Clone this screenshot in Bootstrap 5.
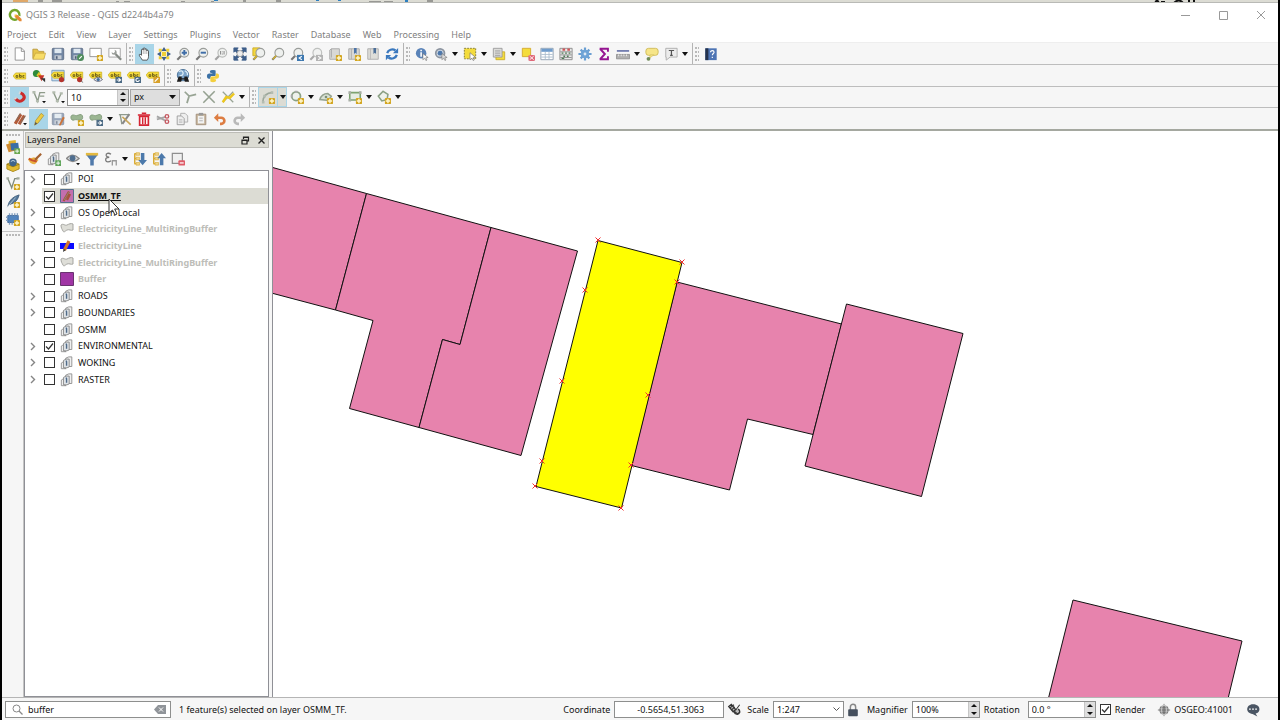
<!DOCTYPE html>
<html lang="en">
<head>
<meta charset="utf-8">
<meta name="viewport" content="width=device-width, initial-scale=1">
<title>QGIS 3 Release - QGIS d2244b4a79</title>
<link href="https://cdn.jsdelivr.net/npm/bootstrap@5.3.0/dist/css/bootstrap.min.css" rel="stylesheet">
<script src="https://cdn.jsdelivr.net/npm/bootstrap@5.3.0/dist/js/bootstrap.bundle.min.js" defer></script>
<style>
  body { font-family: "Noto Sans", "Open Sans", sans-serif; font-size: 9px; line-height: 14px; color: #111; background: #000; }
  svg { display: block; }
  .ic { width: 14px; height: 14px; flex: none; }
  .desktop { background: #000; padding: 0 2px; overflow: hidden; }
  .behind { height: 3px; background: #dcdcd4; border-bottom: 1px solid #b9bab6; overflow: hidden; flex: none; }
  .window { background: #f6f6f6; min-height: 0; }
  .titlebar { background: #fff; height: 24px; color: #858585; padding-left: 6px; gap: 4px; flex: none; }
  .winbtn { border: 0; background: none; padding: 0; width: 34px; height: 22px; display: flex; align-items: center; justify-content: center; }
  .menus { background: #fff; height: 15px; padding-top: 1px; flex: none; }
  .menus a { color: #808080; text-decoration: none; padding: 0 6px 0 5px; }
  .menus a + a { padding-left: 6px; }
  .tools { border-bottom: 1px solid #bdbdbd; background: #f6f6f6; flex: none; height: 22px; }
  .tools.first { border-top: 1px solid #eee; height: 23px; }
  .tools.third { height: 21px; }
  .tools.last { border-bottom: 2px solid #a5a8a0; height: 23px; }
  .grp { display: flex; align-items: center; padding-right: 2px; }
  .grp.sep { border-right: 1px solid #b4b4b4; }
  .handle { width: 8px; height: 16px; flex: none; padding: 0 2px; background: radial-gradient(circle at 2px 2px, #b9b9b9 1px, transparent 1px) 1px 0 / 3px 4px; background-clip: content-box; }
  .tb { border: 0; padding: 0; background: none; width: 19px; height: 20px; display: flex; align-items: center; justify-content: center; flex: none; color: inherit; }
  .tb.on { background: #a9d5e8; }
  .arr { border: 0; padding: 0; background: none; width: 10px; height: 20px; display: flex; align-items: center; justify-content: center; flex: none; }
  .arr::before { content: ""; border: 3px solid transparent; border-top: 4px solid #111; border-bottom: 0; }
  .boxed { display: flex; background: #dcdcd4; outline: 1px solid #a9d5e8; outline-offset: -1px; }
  .boxed .arr { border-left: 1px solid #a9d5e8; }
  .spin, .field { background: #fff; border: 1px solid #8e8f8e; display: flex; align-items: center; height: 17px; flex: none; }
  .spin input, .field input { border: 0; outline: 0; padding: 0 0 0 3px; background: none; font: inherit; color: inherit; min-width: 0; width: 100%; height: 15px; }
  .spin .steps { width: 11px; height: 15px; flex: none; background: #dedede; border-left: 1px solid #c6c6c6; display: flex; flex-direction: column; }
  .steps button { border: 0; padding: 0; background: none; flex: 1; display: flex; align-items: center; justify-content: center; }
  .steps button::before { content: ""; border: 3px solid transparent; border-bottom: 3px solid #111; border-top: 0; }
  .steps button + button::before { border-bottom: 0; border-top: 3px solid #111; }
  .pick { display: flex; align-items: center; position: relative; height: 17px; flex: none; }
  .pick select { appearance: none; width: 100%; height: 17px; border: 1px solid #a5a5a5; border-radius: 0; font: inherit; color: inherit; padding: 0 3px; background: #dedede; outline: 0; }
  .pick svg { position: absolute; right: 4px; pointer-events: none; }
  .pick.light select { background: #fff; border-color: #8e8f8e; }
  .w62 { width: 62px; } .w50 { width: 51px; padding-left: 1px; } .w110 { width: 110px; } .w71 { width: 71px; } .w68 { width: 68px; }
  .rail { width: 22px; flex: none; border-right: 1px solid #c4c4c4; padding-top: 2px; }
  .rail .dots { width: 16px; height: 5px; margin: 0 auto; background: radial-gradient(circle at 2px 2px, #b9b9b9 1px, transparent 1px) 0 0 / 3px 5px; }
  .rail .ending { border-top: 1px solid #c4c4c4; margin-top: 3px; padding-top: 1px; }
  .rail .tb { height: 18px; margin: 0 auto; }
  .dock { width: 245px; flex: none; }
  .dockhead { height: 16px; background: #dcdcd4; border: 1px solid #bcbcb6; margin: 1px 0 0 1px; padding-left: 1px; }
  .docktools { height: 22px; padding-left: 1px; }
  .treebox { background: #fff; border: 1px solid #8f9096; flex: 1; }
  .tree { height: 217px; display: grid; grid-auto-rows: 1fr; }
  .node { display: flex; align-items: center; padding-left: 2px; margin: 0; white-space: nowrap; }
  .node .exp { width: 11px; margin-right: 6px; flex: none; border: 0; padding: 0; background: none; }
  .node .ic { margin: 0 4px 0 5px; }
  .node.sel { background: linear-gradient(#dcdcd4, #dcdcd4) 17px 0 no-repeat; }
  .node.sel label { font-weight: 700; text-decoration: underline; }
  .node.off label { font-weight: 700; color: #bdbdb8; }
  .tick { appearance: none; width: 11px; height: 11px; border: 1px solid #333; background: #fff; margin: 0; flex: none; }
  .tick:checked { background: #fff url("data:image/svg+xml,%3Csvg xmlns='http://www.w3.org/2000/svg' viewBox='0 0 9 9'%3E%3Cpath d='M1 4.500l2.500 2.500L8 1.500' fill='none' stroke='%23333' stroke-width='1.200'/%3E%3C/svg%3E"); }
  .canvas { background: #fff; border-left: 1px solid #8f9096; margin-left: 3px; min-width: 0; overflow: hidden; }
  .status { height: 23px; flex: none; border-top: 1px solid #b5b5b5; padding: 1px 0 0 3px; }
  .search { width: 166px; padding-left: 6px; gap: 2px; }
  .crs { width: auto; margin-left: 12px; gap: 3px; }
  .msgs { margin: 0 16px 0 10px; }
  .pointer { position: absolute; left: 107px; top: 198px; width: 13px; height: 18px; }
</style>
</head>
<body>
<svg width="0" height="0" class="position-absolute" aria-hidden="true">
  <defs>
    <g id="star"><rect x="9" y="9" width="7" height="7" rx="1" fill="#d2a520"/><path d="M12.500 10v5M10 12.500h5" stroke="#fff8d0" stroke-width="1.600"/></g>
    <g id="lens"><path d="M6 10L1.500 14.500" stroke="#777" stroke-width="2.400"/><circle cx="9.500" cy="6.500" r="5" fill="#eef0ee" stroke="#9a9d9a" stroke-width="1.300"/></g>
    <g id="ar"><path d="M11.500 12.500h4.500l-2.200 2.700z" fill="#111"/></g>
    <g id="tag"><path d="M0 7l3-3.500h11.500v7H3z" fill="#f6dc3c" stroke="#c9ac1e" stroke-width=".8"/><path d="M3.500 6.500h2v2h-2zM7.500 4.500v4h2V6.500h-2M13 6.500h-1.700v2H13" fill="none" stroke="#554a10" stroke-width=".9"/></g>
    <g id="poly"><path d="M1 6c0-3 3-3 5-2s5-2 7-1 2 5 0 6-6-1-8 0-4 0-4-3z" fill="#9bb692" stroke="#7f9878"/></g>
    <g id="arrows"><path d="M8.500 9H16v7H8.500z" fill="#4d6b85"/><path d="M10 12.500h4M12 10.500l2.500 2-2.500 2" stroke="#fff" fill="none" stroke-width="1.200"/></g>

    <symbol id="new" viewBox="0 0 16 16"><path d="M2.500 1h7L13 4.500V15H2.500z" fill="#fff" stroke="#8c8c8c"/><path d="M9.500 1v4H13" fill="none" stroke="#8c8c8c"/></symbol>
    <symbol id="open" viewBox="0 0 16 16"><path d="M1 13V2.500h5L7.500 5h6v8z" fill="#e6c44a" stroke="#b8983a"/><path d="M1 14L4 7h11.500L13.500 14z" fill="#f8dd68" stroke="#c4a440" stroke-width=".8"/></symbol>
    <symbol id="save" viewBox="0 0 16 16"><rect x="1.500" y="1.500" width="13" height="13" rx="1" fill="#7387a4" stroke="#5b6b84"/><path d="M4 2h8v5H4z" fill="#dfe8f0"/><path d="M4 9.500h8V14H4z" fill="#c6ccd4"/><path d="M5.500 10.500h2v3h-2z" fill="#50607a"/></symbol>
    <symbol id="saveas" viewBox="0 0 16 16"><use href="#save"/><circle cx="12" cy="12" r="4" fill="#4f8d5c"/><path d="M10.500 13.500l3-3" stroke="#fff" stroke-width="1.300"/></symbol>
    <symbol id="layout" viewBox="0 0 16 16"><path d="M1 1.500h13v9.500H1z" fill="#fff" stroke="#8c8c8c"/><use href="#star"/></symbol>
    <symbol id="layouts" viewBox="0 0 16 16"><path d="M1 1.500h13v10H1z" fill="#fff" stroke="#9b9b9b"/><path d="M8.500 8l6.500 6.500" stroke="#858a85" stroke-width="2.600"/><path d="M4 6a3 3 0 1 0 3.500-3L8 5.500 6.500 7z" fill="#9a9e9a"/></symbol>
    <symbol id="hand" viewBox="0 0 16 16"><path d="M5 15c-1-2-3-4-3.500-5.500C1 8 3 8 4 9.500V3.500c0-1.500 1.800-1.500 2 0V2c0-1.500 2-1.500 2 0v1c.2-1.500 2-1.300 2 0v1.500c.3-1.300 2-1 2 .3V11c0 2-1 3-1.500 4z" fill="#fff" stroke="#333" stroke-width=".9"/><path d="M6 3.500V8M8 3v5M10 4.500V8" stroke="#777" stroke-width=".6"/></symbol>
    <symbol id="pansel" viewBox="0 0 16 16"><path d="M5.500 5.500h5v5h-5zM2 2h3.500v3.500H2zM10.500 2H14v3.500h-3.500zM2 10.500h3.500V14H2zM10.500 10.500H14V14h-3.500z" fill="#f0d035"/><path d="M8 0l3 4.500H5zM8 16l3-4.500H5zM0 8l4.500-3v6zM16 8l-4.500-3v6z" fill="#44628a"/></symbol>
    <symbol id="zin" viewBox="0 0 16 16"><use href="#lens"/><path d="M9.500 3.500v6M6.500 6.500h6" stroke="#3f6da8" stroke-width="2.200"/></symbol>
    <symbol id="zout" viewBox="0 0 16 16"><use href="#lens"/><path d="M6.500 6.500h6" stroke="#3f6da8" stroke-width="2.200"/></symbol>
    <symbol id="znat" viewBox="0 0 16 16"><g opacity=".65"><use href="#lens"/><path d="M7.500 4.500v4M11.500 4.500v4M9.500 5v1M9.500 7.500v1" stroke="#555" stroke-width="1.200"/></g></symbol>
    <symbol id="zfull" viewBox="0 0 16 16"><path d="M1 1h5L4.500 2.500 7 5 5 7 2.500 4.500 1 6zM15 1v5l-1.500-1.500L11 7 9 5l2.500-2.500L10 1zM1 15v-5l1.500 1.500L5 9l2 2-2.500 2.500L6 15zM15 15h-5l1.500-1.500L9 11l2-2 2.500 2.500L15 10z" fill="#3f5f8a" stroke="#3f5f8a"/><circle cx="8" cy="7.500" r="3.500" fill="#eee" stroke="#999"/></symbol>
    <symbol id="zsel" viewBox="0 0 16 16"><path d="M1 1h8v9H1z" fill="#f4d73b" stroke="#caa925"/><use href="#lens"/><path d="M5.500 10.500L2 14" stroke="#d4b32c" stroke-width="2"/></symbol>
    <symbol id="zlay" viewBox="0 0 16 16"><use href="#lens"/><path d="M6 10L2 14" stroke="#d4b32c" stroke-width="1.500"/></symbol>
    <symbol id="zlast" viewBox="0 0 16 16"><use href="#lens"/><path d="M8 9h8v7H8z" fill="#3d78b0"/><path d="M13.500 10.500l-3 2 3 2" fill="none" stroke="#fff" stroke-width="1.300"/></symbol>
    <symbol id="znext" viewBox="0 0 16 16"><g opacity=".6"><use href="#lens"/><path d="M8 9h8v7H8z" fill="#888"/><path d="M10.500 10.500l3 2-3 2" fill="none" stroke="#fff" stroke-width="1.300"/></g></symbol>
    <symbol id="view1" viewBox="0 0 16 16"><path d="M2 3.500L4 2h9v10l-2 2H2z" fill="#d8d8d5" stroke="#a5a5a5"/><path d="M4 2v10" stroke="#aaa"/><use href="#star"/></symbol>
    <symbol id="bm1" viewBox="0 0 16 16"><path d="M2 2h12v12H2z" fill="#d8d8d5" stroke="#a5a5a5"/><path d="M5 2v12" stroke="#aaa"/><path d="M8 1h3v7L9.500 6.500 8 8z" fill="#4c74a8"/><use href="#star"/></symbol>
    <symbol id="bm2" viewBox="0 0 16 16"><path d="M2 2h12v12H2z" fill="#deded9" stroke="#aaa"/><path d="M5 2v12" stroke="#b5b5b5"/><path d="M8.500 1h3v7L10 6.500 8.500 8z" fill="#4c6f98"/></symbol>
    <symbol id="refresh" viewBox="0 0 16 16"><path d="M2.500 7A6 5.500 0 0 1 12 4M13.500 9A6 5.500 0 0 1 4 12" fill="none" stroke="#3a78be" stroke-width="2.600"/><path d="M15 1v6H9zM1 15V9h6z" fill="#3a78be"/></symbol>
    <symbol id="ident" viewBox="0 0 16 16"><circle cx="7" cy="7" r="6" fill="#5a83b8"/><path d="M7 6v5M7 3v1.800" stroke="#fff" stroke-width="1.800"/><path d="M9 7.500v7l2-1.700 1.500 2.700 1.200-.7-1.400-2.500 2.700-.3z" fill="#fff" stroke="#666" stroke-width=".7"/></symbol>
    <symbol id="action" viewBox="0 0 16 16"><circle cx="7" cy="7" r="5" fill="#c9d4e2" stroke="#8d95a0" stroke-width="2"/><circle cx="7" cy="7" r="2.800" fill="#4d78ac"/><path d="M9 7.500v7l2-1.700 1.500 2.700 1.200-.7-1.400-2.500 2.700-.3z" fill="#ddd" stroke="#777" stroke-width=".7"/></symbol>
    <symbol id="select" viewBox="0 0 16 16"><path d="M1.500 1.500h13v12h-13z" fill="#f4dc3c" stroke="#7c7433" stroke-dasharray="2 1.300"/><path d="M8 6.500v8l2.200-1.700 1.500 2.700 1.200-.7-1.400-2.500 3-.3z" fill="#fff" stroke="#777" stroke-width=".8"/></symbol>
    <symbol id="selform" viewBox="0 0 16 16"><path d="M4.500 5.500h10v9h-10z" fill="#f4dc3c" stroke="#c9ab2a"/><path d="M1.500 1.500h10v10h-10z" fill="#dcdcda" stroke="#999"/><path d="M3.500 4.500h6M3.500 7h6M3.500 9.500h6" stroke="#999"/></symbol>
    <symbol id="desel" viewBox="0 0 16 16"><path d="M1.500 1.500h9.500v9.500H1.500z" fill="#f4dc3c" stroke="#d4a82a"/><rect x="8.500" y="9" width="7.500" height="7" rx="1.500" fill="#e0697a"/><path d="M10 10.500l4.500 4M14.500 10.500l-4.500 4" stroke="#fff"/></symbol>
    <symbol id="attr" viewBox="0 0 16 16"><path d="M1 1.500h14v13H1z" fill="#fff" stroke="#8b9cae"/><path d="M1.500 2h13v3.500h-13z" fill="#6f9ccc"/><path d="M1.500 8.500h13M1.500 11.500h13M6 5.500v9M10.300 5.500v9" stroke="#a9bccd"/></symbol>
    <symbol id="calc" viewBox="0 0 16 16"><path d="M1 1.500h14v13H1z" fill="#e8e8e8" stroke="#888"/><path d="M1.500 5.500h13M1.500 9h13M1.500 12h13" stroke="#8a8a8a"/><path d="M4 3h3M9.500 3h3" stroke="#cf5558" stroke-width="2.600"/><path d="M3 7h2M7 7h2M11 7h2M5 10.500h2M9 10.500h2M3 13h3" stroke="#4f7c56" stroke-width="1.600"/></symbol>
    <symbol id="gear" viewBox="0 0 16 16"><path d="M8 .5v15M.5 8h15M3 3l10 10M13 3L3 13" stroke="#6a9fd3" stroke-width="2.500"/><circle cx="8" cy="8" r="4.900" fill="#6ea3d6"/><circle cx="8" cy="8" r="1.600" fill="#dfe9f3"/></symbol>
    <symbol id="sum" viewBox="0 0 16 16"><path d="M3 2h9.500v3.500M3.500 2L9 8l-5.500 6M3 14h9.500v-3.500" fill="none" stroke="#951591" stroke-width="2.200"/></symbol>
    <symbol id="measure" viewBox="0 0 16 16"><path d="M1 4.500h14" stroke="#4c5a9a" stroke-width="1.600"/><path d="M.5 8.500h15v5H.5z" fill="#b0b0b0" stroke="#909090"/><path d="M3 8.500v2M6 8.500v2M9 8.500v2M12 8.500v2" stroke="#eee"/></symbol>
    <symbol id="tips" viewBox="0 0 16 16"><rect x="1" y="1.500" width="14" height="8" rx="3" fill="#f6e588" stroke="#cdb857"/><path d="M6 9l-1 4 5-4z" fill="#f6e588" stroke="#cdb857" stroke-width=".6"/><circle cx="4" cy="13.500" r="2.200" fill="#6f8b57"/></symbol>
    <symbol id="text" viewBox="0 0 16 16"><path d="M2 1.500h13v10H7L2.500 15v-3.500H2z" fill="#ececec" stroke="#aaa"/><path d="M5.500 4h6M8.500 4v6M7 9.500h3" stroke="#555" stroke-width="1.400"/></symbol>
    <symbol id="help" viewBox="0 0 16 16"><path d="M1.500 1.500h13v13.500h-13z" fill="#4d74b4"/><path d="M1.500 1.500H5v13.500H1.500z" fill="#24324c"/><path d="M7.500 6c0-2.500 4-2.500 4 0 0 1.500-2 1.500-2 3.500M9.500 11v1.500" fill="none" stroke="#fff" stroke-width="1.300"/></symbol>

    <symbol id="lab" viewBox="0 0 16 16"><use href="#tag" y="1"/></symbol>
    <symbol id="diag" viewBox="0 0 16 16"><circle cx="5" cy="5" r="4" fill="#2e8b3b"/><path d="M8 3l3 4-3 3-3-3z" fill="#e4c52b"/><path d="M7 7h7l-3 7z" fill="#c63427"/><path d="M10 10.500l5 0v4.500z" fill="#333"/></symbol>
    <symbol id="labpin" viewBox="0 0 16 16"><path d="M1 1.500h14v12H1z" fill="#cfe0ee" stroke="#6d95bb"/><use href="#tag"/><circle cx="12" cy="12" r="3" fill="#b5342c"/></symbol>
    <symbol id="labred" viewBox="0 0 16 16"><use href="#tag"/><circle cx="11" cy="12" r="3" fill="#b5342c"/><path d="M12 13l3 2.500" stroke="#666"/></symbol>
    <symbol id="labeye" viewBox="0 0 16 16"><use href="#tag"/><path d="M5.500 12q5-5 10 0q-5 4.500-10 0z" fill="#e8eef3" stroke="#667"/><circle cx="10.500" cy="12" r="1.800" fill="#3d6a9b"/></symbol>
    <symbol id="labmove" viewBox="0 0 16 16"><use href="#tag"/><use href="#arrows"/></symbol>
    <symbol id="labrot" viewBox="0 0 16 16"><use href="#tag"/><path d="M8.500 9H16v7H8.500z" fill="#4d6b85"/><path d="M14 12.500a1.900 1.900 0 1 1-1-1.700" fill="none" stroke="#fff" stroke-width="1.200"/></symbol>
    <symbol id="labedit" viewBox="0 0 16 16"><use href="#tag"/><path d="M8.500 9H16v7H8.500z" fill="#d8a12a"/><path d="M10 14.500l4-4" stroke="#fff" stroke-width="1.400"/></symbol>
    <symbol id="osm" viewBox="0 0 16 16"><circle cx="8" cy="7" r="6.500" fill="#7ba3c9" stroke="#456d94"/><path d="M3 3q4-2 5 1T4 8M10 2q4 2 3 5" fill="none" stroke="#dcecf6" stroke-width="1.500"/><path d="M3 8.500h3.500v2h3v-2H13l2 6h-5l-.5-2.500h-3L6 14.500H1z" fill="#1c1c1c"/></symbol>
    <symbol id="py" viewBox="0 0 16 16"><path d="M4.500 4V2.500Q4.500 1 8 1t3 1.500V7Q11 8 9 8H6Q5 8 5 11H3Q1 11 1 8t2.500-3H8" fill="#3c71a6"/><path d="M11.500 12v1.500Q11.500 15 8 15t-3-1.500V10q0-1.500 2-1.500h3Q11.500 8.500 11.500 5H13q2 0 2 3t-2.500 3H8" fill="#f3cf3f"/></symbol>

    <symbol id="magnet" viewBox="0 0 16 16"><path d="M2.500 9.500C6 14 9 13.500 11.500 11S13 5 8 3" fill="none" stroke="#cc2b2b" stroke-width="3.600"/><path d="M1.500 10.800l2.800-2.300M7 4.800L8.500 1.500" stroke="#d9d9d9" stroke-width="1.800"/></symbol>
    <symbol id="vert" viewBox="0 0 16 16"><path d="M2 2l4.500 11L9 3h6M9 7h5" fill="none" stroke="#8e9b8a" stroke-width="1.600"/><path d="M.5 1h3.500v3H.5zM4.500 11.500H8V14H4.500z" fill="#b2bbae"/><use href="#ar"/></symbol>
    <symbol id="vee" viewBox="0 0 16 16"><path d="M3 3l4.500 10 4-9" fill="none" stroke="#8e9b8a" stroke-width="1.500"/><path d="M1.500 1.500H5V4H1.500zM10 2.500h3.500V5H10zM5.500 11.500H9V14H5.500z" fill="#b2bbae"/><use href="#ar"/></symbol>
    <symbol id="topo" viewBox="0 0 16 16"><path d="M2 2l5 5 8-2M7 7L4.500 15" fill="none" stroke="#98a494" stroke-width="2"/></symbol>
    <symbol id="cross" viewBox="0 0 16 16"><path d="M1.500 1.500l13 13M14.500 1.500l-13 13" fill="none" stroke="#95a191" stroke-width="1.800"/></symbol>
    <symbol id="trace" viewBox="0 0 16 16"><path d="M2 2l12 12M14 2L2 14" stroke="#98a494" stroke-width="1.500"/><path d="M2 14l4-6 4 1 5-5" fill="none" stroke="#edc71d" stroke-width="2.800"/></symbol>
    <symbol id="curve" viewBox="0 0 16 16"><path d="M2 14Q3 3 13 3" fill="none" stroke="#9ca79a" stroke-width="1.800"/><path d="M1 12.500h3v3H1zM2.500 5.500h3v3h-3zM11 1.500h3v3h-3z" fill="#b4bcb1"/><use href="#star"/></symbol>
    <symbol id="circ" viewBox="0 0 16 16"><circle cx="7" cy="7" r="5" fill="#eef2ec" stroke="#8ba184" stroke-width="2"/><path d="M5.500 .8h3v2.400h-3zM.8 5.500h2.400v3H.8z" fill="#aaa"/><use href="#star"/></symbol>
    <symbol id="elli" viewBox="0 0 16 16"><path d="M1 11q2-7 9-7l4 3-3 5z" fill="#d9e2d5" stroke="#94a28f" stroke-width="1.800"/><circle cx="8" cy="8" r="1.500" fill="#7c8f77"/><use href="#star"/></symbol>
    <symbol id="rect" viewBox="0 0 16 16"><path d="M2 3h12v8.500H2z" fill="#e6ece3" stroke="#7da36f" stroke-width="1.800"/><path d="M.5 1.500h3v3h-3zM12.500 1.500h3v3h-3zM.5 10h3v3h-3z" fill="#a8aea5"/><use href="#star"/></symbol>
    <symbol id="hex" viewBox="0 0 16 16"><path d="M7 1.500l5.500 3.500-1 6-6 1.500L1.500 7z" fill="#eef2ec" stroke="#8ba184" stroke-width="1.800"/><use href="#star"/></symbol>

    <symbol id="edits" viewBox="0 0 16 16"><path d="M2.500 13.500L9 2.500M7 14l6-10" stroke="#b35a38" stroke-width="3.600"/><path d="M3.500 10L8.500 1.500M8.500 13l5.500-9" stroke="#7d7168" stroke-width="1.100"/><use href="#ar"/></symbol>
    <symbol id="pencil" viewBox="0 0 16 16"><path d="M3 15l1-5 6.500-8.500 3 2.500L7 12.500z" fill="#eccb43" stroke="#a98f33" stroke-width=".8"/><path d="M3 15l.8-3.500L6 13z" fill="#555"/></symbol>
    <symbol id="saveed" viewBox="0 0 16 16"><use href="#save" opacity=".7"/><path d="M9 15l4.500-9.500 2.200 1.200L11 15.500z" fill="#cc7339"/></symbol>
    <symbol id="addpoly" viewBox="0 0 16 16"><use href="#poly"/><use href="#star"/></symbol>
    <symbol id="movepoly" viewBox="0 0 16 16"><use href="#poly"/><use href="#arrows"/></symbol>
    <symbol id="node" viewBox="0 0 16 16"><path d="M1 3h12M2.500 3l2 11" fill="none" stroke="#8f9a8d" stroke-width="1.600"/><path d="M5 13.500L13 2.500" stroke="#888" stroke-width="2.300"/><path d="M5 5.500l9.500 9" stroke="#c9a65a" stroke-width="1.800"/></symbol>
    <symbol id="trash" viewBox="0 0 16 16"><path d="M3 5h10v10H3z" fill="#fff" stroke="#d52533" stroke-width="1.900"/><path d="M1 3.500h14M5.500 1.500h5M6.500 6v8M9.500 6v8" stroke="#d52533" stroke-width="1.700"/></symbol>
    <symbol id="cut" viewBox="0 0 16 16"><path d="M1 5l10 5M1 8.500l10-3" stroke="#a5a5a5" stroke-width="2"/><circle cx="12.500" cy="5" r="2" fill="none" stroke="#c65a62" stroke-width="1.600"/><circle cx="12.500" cy="11" r="2" fill="none" stroke="#c65a62" stroke-width="1.600"/></symbol>
    <symbol id="copy" viewBox="0 0 16 16"><path d="M6.500 1.500h5l3 3v7h-8z" fill="#eee" stroke="#aaa"/><path d="M2.500 4.500h5l3 3v7h-8z" fill="#eee" stroke="#999"/><path d="M4.500 9h4M4.500 11.500h4" stroke="#aaa"/></symbol>
    <symbol id="paste" viewBox="0 0 16 16"><path d="M2.500 2.500h11v12h-11z" fill="#c9b9a1" stroke="#a08c78"/><path d="M4.500 4.500h7v8.500h-7z" fill="#f2f2f2"/><path d="M5.500 1h5v3h-5z" fill="#999"/><path d="M6 7h4M6 10h4" stroke="#aaa"/></symbol>
    <symbol id="undo" viewBox="0 0 16 16"><path d="M4 6.500h5.500a3.500 3.500 0 0 1 0 7H8" fill="none" stroke="#dd7d42" stroke-width="3"/><path d="M1 6.500l5-5v10z" fill="#dd7d42"/></symbol>
    <symbol id="redo" viewBox="0 0 16 16"><path d="M12 6.500H6.500a3.500 3.500 0 0 0 0 7H8" fill="none" stroke="#b9b9b9" stroke-width="3"/><path d="M15 6.500l-5-5v10z" fill="#b9b9b9"/></symbol>

    <symbol id="dsm" viewBox="0 0 16 16"><path d="M3 1l8-1 1 8-9 1z" fill="#e0b32f"/><path d="M0 5l8-2 3 9-8 2z" fill="#d08a2e"/><path d="M5 4l9-1 1 8-9 1z" fill="#3a6ea5"/><path d="M9.500 9.500H16V16H9.500z" fill="#6aa84f"/><path d="M12.700 10.500v4.500M10.500 12.700H15" stroke="#fff"/></symbol>
    <symbol id="gpkg" viewBox="0 0 16 16"><path d="M1 7l7-3 7 3v5.500L8 15.500 1 12.500z" fill="#e3bb32" stroke="#a88716"/><path d="M1 7l7 3 7-3" fill="none" stroke="#8c7212"/><circle cx="8" cy="5" r="4.300" fill="#40658a"/><path d="M5.500 4q2.500-2.500 5 0" stroke="#cfe0ee" fill="none"/></symbol>
    <symbol id="vnew" viewBox="0 0 16 16"><path d="M2 2.500l4.500 11L10 3h4" fill="none" stroke="#7f8a7c" stroke-width="1.500"/><path d="M.5 1.500h3v2.500h-3zM12 1.500h3.500V4H12z" fill="#a3ab9f"/><use href="#star"/></symbol>
    <symbol id="feather" viewBox="0 0 16 16"><path d="M2 14Q4 4 15 1q-2 9-11 11z" fill="#54799b" stroke="#3f5e7c"/><path d="M1 15.500L11 4" stroke="#cfdae4" stroke-width=".8"/><use href="#star"/></symbol>
    <symbol id="chip" viewBox="0 0 16 16"><path d="M2 4h12v8H2z" fill="#5284bd" stroke="#3c669a"/><path d="M4 1.500V4M7 1.500V4M10 1.500V4M13 1.500V4M4 12v2.500M7 12v2.500M0 6h2M0 9.500h2" stroke="#7f9cbc" stroke-width="1.500"/><use href="#star"/></symbol>

    <symbol id="brush" viewBox="0 0 16 16"><path d="M0 8l7-2 5 3-4 5Q2 14 0 8z" fill="#e8ae3f"/><path d="M1 7.500Q5 11 10 10.500" stroke="#c8502f" stroke-width="2.200" fill="none"/><path d="M8 9l7-7" stroke="#a5612f" stroke-width="2.500"/></symbol>
    <symbol id="group" viewBox="0 0 16 16"><path d="M6.500 2.500L10 1h3.500v11H6.500z" fill="#f0f0f0" stroke="#8a8a8a"/><path d="M4 5L7 3.500h3.500v9L8 13.500H4z" fill="#dfe3e7" stroke="#858585"/><path d="M1.500 14.500V8L4 6.500v7l3 1z" fill="#eee" stroke="#8f8f8f"/><path d="M7.500 6v5M6.500 6h1.500" stroke="#4f6a88" stroke-width="1.600"/></symbol>
    <symbol id="addgrp" viewBox="0 0 16 16"><use href="#group"/><path d="M9.500 9.500H16V16H9.500z" fill="#5fa55a"/><path d="M12.700 10.500V15M10.500 12.700H15" stroke="#fff"/></symbol>
    <symbol id="eye" viewBox="0 0 16 16"><path d="M.5 7.500q7-8 14.500 0q-7 7-14.500 0z" fill="#dcdcdc" stroke="#888" stroke-width="1.500"/><circle cx="7.500" cy="7" r="3.300" fill="#506f90"/><use href="#ar"/></symbol>
    <symbol id="filter" viewBox="0 0 16 16"><path d="M1.500 3.500h13L10 9v6.500H6V9z" fill="#507aab"/><path d="M1 1h14v3H1z" fill="#e3b940"/></symbol>
    <symbol id="eps" viewBox="0 0 16 16"><path d="M8 2.500C5 .5 2 1.500 2.500 4 3 6 5 6 6 6 3 6 1.500 7 2 9.500 2.500 12 6 11.500 8 10" fill="none" stroke="#777" stroke-width="1.500"/><path d="M9.500 15.500V10h4.500v5.500" stroke="#999" stroke-width="1.500" fill="none"/></symbol>
    <symbol id="expand" viewBox="0 0 16 16"><path d="M1.500 2H7M1.500 7.500H7M1.500 13.500H7M2 2v11.500" stroke="#d9ab35" stroke-width="1.700"/><path d="M3.500 .8h4v3h-4zM3.500 6h4v3h-4zM3.500 12h4v3h-4z" fill="#efd58c" stroke="#d9ab35" stroke-width=".7"/><path d="M9 1h4v8h3l-5 6-5-6h3z" fill="#4c79ab"/></symbol>
    <symbol id="collapse" viewBox="0 0 16 16"><path d="M1.500 2H7M1.500 7.500H7M1.500 13.500H7M2 2v11.500" stroke="#d9ab35" stroke-width="1.700"/><path d="M3.500 .8h4v3h-4zM3.500 6h4v3h-4zM3.500 12h4v3h-4z" fill="#efd58c" stroke="#d9ab35" stroke-width=".7"/><path d="M9 15h4V7h3l-5-6-5 6h3z" fill="#4c79ab"/></symbol>
    <symbol id="remove" viewBox="0 0 16 16"><path d="M1.500 1.500h11.500v11.500H1.500z" fill="#f0f0f0" stroke="#8f8f8f" stroke-width="1.400"/><rect x="8.500" y="9.500" width="7.500" height="6" rx="1" fill="#de5c68"/><path d="M10 12.500h4.500" stroke="#fff" stroke-width="1.400"/></symbol>

    <symbol id="t-edit" viewBox="0 0 14 14"><path d="M.5.5h13v13H.5z" fill="#c26fae" stroke="#57708c"/><path d="M3.500 12L9 2.500M7 11l3-6" stroke="#a5543a" stroke-width="2.300"/><path d="M4 11l5-8" stroke="#8d8578"/></symbol>
    <symbol id="t-line" viewBox="0 0 14 14"><path d="M0 4h14v6H0z" fill="#0a0aff"/><path d="M4.500 11L9 2" stroke="#d0742b" stroke-width="3.200"/><path d="M3 13l.5-3L6 11z" fill="#333"/></symbol>
    <symbol id="t-poly" viewBox="0 0 14 14"><path d="M1 3c2-2 4 1 6 0s4-2 6-1v6c-2 1-4-1-6 0s-3 3-4 1S1 6 1 3z" fill="#deded8" stroke="#a5a5a1"/></symbol>
    <symbol id="t-buf" viewBox="0 0 14 14"><path d="M.5.5h13v13H.5z" fill="#a035a5" stroke="#6a3470"/></symbol>
    <symbol id="chev" viewBox="0 0 11 11"><path d="M4 2l3.500 3.500L4 9" fill="none" stroke="#858585" stroke-width="1.400"/></symbol>
    <symbol id="mouse" viewBox="0 0 16 16"><path d="M2 4l3-2.500 5 6L7 10zM8.500 9.500a3 3 0 1 0 4-2.500" fill="#bbb" stroke="#333" stroke-width="1.500"/><path d="M3.500 5.500L8 2M5 8l4-3.500M14.500 2L10 8M9 10l3 2.500 3-2" fill="none" stroke="#333" stroke-width="1.200"/></symbol>
    <symbol id="lock" viewBox="0 0 16 16"><path d="M5 8V4.500a3 3 0 0 1 6 0V8" fill="none" stroke="#888" stroke-width="1.700"/><rect x="2.500" y="7" width="11" height="8" rx="1" fill="#454f5d"/></symbol>
    <symbol id="globe" viewBox="0 0 16 16"><circle cx="8" cy="8" r="5.500" fill="#9c9c9c"/><path d="M1 8h14M8 1v14M3.500 5h9M3.500 11h9" stroke="#6f6f6f" stroke-width="1"/><ellipse cx="8" cy="8" rx="2.800" ry="5.500" fill="none" stroke="#ddd" stroke-width=".8"/></symbol>
    <symbol id="bubble" viewBox="0 0 16 16"><path d="M8 1.500c9 0 9.500 9 3 10.500L13 15.500 7.500 12.500C-1.500 12 0 1.500 8 1.500z" fill="#4a5563"/><path d="M3.500 7h2M7 7h2M10.500 7h2" stroke="#fff" stroke-width="1.700"/></symbol>
    <symbol id="logo" viewBox="0 0 16 16"><path d="M10.500 12.500A5.500 5.500 0 1 1 13 9" fill="none" stroke="#72a52b" stroke-width="2.800"/><path d="M8 8h3l4.500 4.500V15H13L8 10.500z" fill="#e58a35"/><path d="M7.500 7.500h3l-3 3z" fill="#f0c53b"/></symbol>
    <symbol id="vmark" viewBox="0 0 6 6"><path d="M.5.5l5 5M5.500.5l-5 5" stroke="#f03030"/></symbol>
  </defs>
</svg>

<div class="desktop vh-100 d-flex flex-column">
  <div class="behind">
    <svg width="100%" height="3"><path d="M11 0h15v3H11z" fill="#e0a868"/><path d="M36 1h5M50 1h10M114 2h3M122 2h6M179 2h4M209 2h3M241 1h3M274 1h5M367 2h12M382 2h9M425 1h6" stroke="#555"/><path d="M212 0h4M314 0h3M336 0h3M403 1h3" stroke="#2c7fc0" stroke-width="2"/><path d="M1153 3l2-3 2 3M1159 2h4M1172 3q5-5 9 0M1187 0v3M1192 0v3" fill="none" stroke="#111" stroke-width="2"/></svg>
  </div>
  <div class="window d-flex flex-column flex-grow-1">
    <header class="titlebar d-flex align-items-center">
      <svg class="ic"><use href="#logo"/></svg>
      <span class="flex-grow-1">QGIS 3 Release - QGIS d2244b4a79</span>
      <button class="winbtn" aria-label="Minimise"><svg width="10" height="10"><path d="M1 5.500h9" stroke="#999"/></svg></button>
      <button class="winbtn" aria-label="Maximise"><svg width="10" height="10"><path d="M1.500 1.500h8v8h-8z" fill="none" stroke="#999"/></svg></button>
      <button class="winbtn" aria-label="Close"><svg width="10" height="10"><path d="M1 1l8 8M9 1l-8 8" stroke="#999"/></svg></button>
    </header>
    <nav class="menus d-flex align-items-center">
      <a href="#">Project</a><a href="#">Edit</a><a href="#">View</a><a href="#">Layer</a><a href="#">Settings</a><a href="#">Plugins</a><a href="#">Vector</a><a href="#">Raster</a><a href="#">Database</a><a href="#">Web</a><a href="#">Processing</a><a href="#">Help</a>
    </nav>

    <div class="tools first d-flex" role="toolbar" aria-label="Project and map tools">
      <div class="grp sep"><span class="handle"></span>
        <button class="tb" aria-label="New project"><svg class="ic"><use href="#new"/></svg></button>
        <button class="tb" aria-label="Open project"><svg class="ic"><use href="#open"/></svg></button>
        <button class="tb" aria-label="Save project"><svg class="ic"><use href="#save"/></svg></button>
        <button class="tb" aria-label="Save project as"><svg class="ic"><use href="#saveas"/></svg></button>
        <button class="tb" aria-label="New layout"><svg class="ic"><use href="#layout"/></svg></button>
        <button class="tb" aria-label="Layout manager"><svg class="ic"><use href="#layouts"/></svg></button>
      </div>
      <div class="grp sep"><span class="handle"></span>
        <button class="tb on" aria-label="Pan map"><svg class="ic"><use href="#hand"/></svg></button>
        <button class="tb" aria-label="Pan to selection"><svg class="ic"><use href="#pansel"/></svg></button>
        <button class="tb" aria-label="Zoom in"><svg class="ic"><use href="#zin"/></svg></button>
        <button class="tb" aria-label="Zoom out"><svg class="ic"><use href="#zout"/></svg></button>
        <button class="tb" aria-label="Zoom to native resolution"><svg class="ic"><use href="#znat"/></svg></button>
        <button class="tb" aria-label="Zoom full"><svg class="ic"><use href="#zfull"/></svg></button>
        <button class="tb" aria-label="Zoom to selection"><svg class="ic"><use href="#zsel"/></svg></button>
        <button class="tb" aria-label="Zoom to layer"><svg class="ic"><use href="#zlay"/></svg></button>
        <button class="tb" aria-label="Zoom last"><svg class="ic"><use href="#zlast"/></svg></button>
        <button class="tb" aria-label="Zoom next"><svg class="ic"><use href="#znext"/></svg></button>
        <button class="tb" aria-label="New map view"><svg class="ic"><use href="#view1"/></svg></button>
        <button class="tb" aria-label="New bookmark"><svg class="ic"><use href="#bm1"/></svg></button>
        <button class="tb" aria-label="Show bookmarks"><svg class="ic"><use href="#bm2"/></svg></button>
        <button class="tb" aria-label="Refresh"><svg class="ic"><use href="#refresh"/></svg></button>
      </div>
      <div class="grp sep"><span class="handle"></span>
        <button class="tb" aria-label="Identify features"><svg class="ic"><use href="#ident"/></svg></button>
        <button class="tb" aria-label="Run feature action"><svg class="ic"><use href="#action"/></svg></button><button class="arr" aria-label="Feature actions"></button>
        <button class="tb" aria-label="Select features"><svg class="ic"><use href="#select"/></svg></button><button class="arr" aria-label="Selection tools"></button>
        <button class="tb" aria-label="Select by value"><svg class="ic"><use href="#selform"/></svg></button><button class="arr" aria-label="Selection by value options"></button>
        <button class="tb" aria-label="Deselect features"><svg class="ic"><use href="#desel"/></svg></button>
        <button class="tb" aria-label="Open attribute table"><svg class="ic"><use href="#attr"/></svg></button>
        <button class="tb" aria-label="Field calculator"><svg class="ic"><use href="#calc"/></svg></button>
        <button class="tb" aria-label="Processing toolbox"><svg class="ic"><use href="#gear"/></svg></button>
        <button class="tb" aria-label="Statistical summary"><svg class="ic"><use href="#sum"/></svg></button>
        <button class="tb" aria-label="Measure line"><svg class="ic"><use href="#measure"/></svg></button><button class="arr" aria-label="Measure tools"></button>
        <button class="tb" aria-label="Map tips"><svg class="ic"><use href="#tips"/></svg></button>
        <button class="tb" aria-label="Text annotation"><svg class="ic"><use href="#text"/></svg></button><button class="arr" aria-label="Annotation tools"></button>
      </div>
      <div class="grp"><span class="handle"></span>
        <button class="tb" aria-label="Help contents"><svg class="ic"><use href="#help"/></svg></button>
      </div>
    </div>

    <div class="tools d-flex" role="toolbar" aria-label="Label tools">
      <div class="grp sep"><span class="handle"></span>
        <button class="tb" aria-label="Layer labelling"><svg class="ic"><use href="#lab"/></svg></button>
        <button class="tb" aria-label="Layer diagrams"><svg class="ic"><use href="#diag"/></svg></button>
        <button class="tb" aria-label="Highlight pinned labels"><svg class="ic"><use href="#labpin"/></svg></button>
        <button class="tb" aria-label="Pin labels"><svg class="ic"><use href="#labred"/></svg></button>
        <button class="tb" aria-label="Show labels"><svg class="ic"><use href="#labeye"/></svg></button>
        <button class="tb" aria-label="Move label"><svg class="ic"><use href="#labmove"/></svg></button>
        <button class="tb" aria-label="Rotate label"><svg class="ic"><use href="#labrot"/></svg></button>
        <button class="tb" aria-label="Change label"><svg class="ic"><use href="#labedit"/></svg></button>
      </div>
      <div class="grp sep"><span class="handle"></span>
        <button class="tb" aria-label="Place search"><svg class="ic"><use href="#osm"/></svg></button>
      </div>
      <div class="grp"><span class="handle"></span>
        <button class="tb" aria-label="Python console"><svg class="ic"><use href="#py"/></svg></button>
      </div>
    </div>

    <div class="tools third d-flex" role="toolbar" aria-label="Snapping and shape tools">
      <div class="grp sep"><span class="handle"></span>
        <button class="tb on" aria-label="Enable snapping"><svg class="ic"><use href="#magnet"/></svg></button>
        <button class="tb" aria-label="Snapping layers"><svg class="ic"><use href="#vert"/></svg></button>
        <button class="tb" aria-label="Snapping type"><svg class="ic"><use href="#vee"/></svg></button>
        <div class="spin w62"><input type="text" value="10" aria-label="Snapping tolerance"><span class="steps"><button aria-label="Increase"></button><button aria-label="Decrease"></button></span></div>
        <div class="pick w50"><select aria-label="Tolerance unit"><option>px</option></select><svg width="7" height="4"><path d="M0 0h7L3.500 4z" fill="#111"/></svg></div>
        <button class="tb" aria-label="Topological editing"><svg class="ic"><use href="#topo"/></svg></button>
        <button class="tb" aria-label="Snapping on intersection"><svg class="ic"><use href="#cross"/></svg></button>
        <button class="tb" aria-label="Enable tracing"><svg class="ic"><use href="#trace"/></svg></button><button class="arr" aria-label="Tracing options"></button>
      </div>
      <div class="grp"><span class="handle"></span>
        <span class="boxed"><button class="tb" aria-label="Circular string"><svg class="ic"><use href="#curve"/></svg></button><button class="arr" aria-label="Curve options"></button></span>
        <button class="tb" aria-label="Add circle"><svg class="ic"><use href="#circ"/></svg></button><button class="arr" aria-label="Circle options"></button>
        <button class="tb" aria-label="Add ellipse"><svg class="ic"><use href="#elli"/></svg></button><button class="arr" aria-label="Ellipse options"></button>
        <button class="tb" aria-label="Add rectangle"><svg class="ic"><use href="#rect"/></svg></button><button class="arr" aria-label="Rectangle options"></button>
        <button class="tb" aria-label="Add regular polygon"><svg class="ic"><use href="#hex"/></svg></button><button class="arr" aria-label="Polygon options"></button>
      </div>
    </div>

    <div class="tools last d-flex" role="toolbar" aria-label="Digitizing tools">
      <div class="grp"><span class="handle"></span>
        <button class="tb" aria-label="Current edits"><svg class="ic"><use href="#edits"/></svg></button>
        <button class="tb on" aria-label="Toggle editing"><svg class="ic"><use href="#pencil"/></svg></button>
        <button class="tb" aria-label="Save layer edits"><svg class="ic"><use href="#saveed"/></svg></button>
        <button class="tb" aria-label="Add polygon feature"><svg class="ic"><use href="#addpoly"/></svg></button>
        <button class="tb" aria-label="Move feature"><svg class="ic"><use href="#movepoly"/></svg></button><button class="arr" aria-label="Move options"></button>
        <button class="tb" aria-label="Vertex tool"><svg class="ic"><use href="#node"/></svg></button>
        <button class="tb" aria-label="Delete selected"><svg class="ic"><use href="#trash"/></svg></button>
        <button class="tb" aria-label="Cut features"><svg class="ic"><use href="#cut"/></svg></button>
        <button class="tb" aria-label="Copy features"><svg class="ic"><use href="#copy"/></svg></button>
        <button class="tb" aria-label="Paste features"><svg class="ic"><use href="#paste"/></svg></button>
        <button class="tb" aria-label="Undo"><svg class="ic"><use href="#undo"/></svg></button>
        <button class="tb" aria-label="Redo"><svg class="ic"><use href="#redo"/></svg></button>
      </div>
    </div>

    <main class="d-flex flex-grow-1 overflow-hidden">
      <div class="rail" role="toolbar" aria-label="Data sources">
        <div class="dots"></div>
        <button class="tb" aria-label="Data source manager"><svg class="ic"><use href="#dsm"/></svg></button>
        <button class="tb" aria-label="New GeoPackage layer"><svg class="ic"><use href="#gpkg"/></svg></button>
        <button class="tb" aria-label="New shapefile layer"><svg class="ic"><use href="#vnew"/></svg></button>
        <button class="tb" aria-label="New SpatiaLite layer"><svg class="ic"><use href="#feather"/></svg></button>
        <button class="tb" aria-label="New scratch layer"><svg class="ic"><use href="#chip"/></svg></button>
        <div class="ending"><div class="dots"></div></div>
      </div>
      <aside class="dock d-flex flex-column">
        <div class="dockhead d-flex align-items-center">
          <span class="flex-grow-1">Layers Panel</span>
          <button class="tb w-auto me-1" aria-label="Float panel"><svg width="9" height="9"><path d="M2.500 3V1h5v4H6M1 4h5v4H1zM2.500 1.500h5M1 4.500h5" fill="none" stroke="#222" stroke-width="1.200"/></svg></button>
          <button class="tb w-auto ms-1" aria-label="Close panel"><svg width="10" height="7"><path d="M.5.5l6 6M6.500.5l-6 6" stroke="#222" stroke-width="1.400"/></svg></button>
        </div>
        <div class="docktools d-flex align-items-center">
          <button class="tb" aria-label="Layer styling"><svg class="ic"><use href="#brush"/></svg></button>
          <button class="tb" aria-label="Add group"><svg class="ic"><use href="#addgrp"/></svg></button>
          <button class="tb" aria-label="Map themes"><svg class="ic"><use href="#eye"/></svg></button>
          <button class="tb" aria-label="Filter legend"><svg class="ic"><use href="#filter"/></svg></button>
          <button class="tb" aria-label="Filter by expression"><svg class="ic"><use href="#eps"/></svg></button><button class="arr" aria-label="Expression options"></button>
          <button class="tb" aria-label="Expand all"><svg class="ic"><use href="#expand"/></svg></button>
          <button class="tb" aria-label="Collapse all"><svg class="ic"><use href="#collapse"/></svg></button>
          <button class="tb" aria-label="Remove layer"><svg class="ic"><use href="#remove"/></svg></button>
        </div>
        <div class="treebox">
          <div class="tree">
            <div class="node"><button class="exp" aria-label="Expand"><svg width="11" height="11"><use href="#chev"/></svg></button><input class="tick" type="checkbox" id="l1"><svg class="ic"><use href="#group"/></svg><label for="l1">POI</label></div>
            <div class="node sel"><span class="exp"></span><input class="tick" type="checkbox" id="l2" checked><svg class="ic"><use href="#t-edit"/></svg><label for="l2">OSMM_TF</label></div>
            <div class="node"><button class="exp" aria-label="Expand"><svg width="11" height="11"><use href="#chev"/></svg></button><input class="tick" type="checkbox" id="l3"><svg class="ic"><use href="#group"/></svg><label for="l3">OS Open Local</label></div>
            <div class="node off"><button class="exp" aria-label="Expand"><svg width="11" height="11"><use href="#chev"/></svg></button><input class="tick" type="checkbox" id="l4"><svg class="ic"><use href="#t-poly"/></svg><label for="l4">ElectricityLine_MultiRingBuffer</label></div>
            <div class="node off"><span class="exp"></span><input class="tick" type="checkbox" id="l5"><svg class="ic"><use href="#t-line"/></svg><label for="l5">ElectricityLine</label></div>
            <div class="node off"><button class="exp" aria-label="Expand"><svg width="11" height="11"><use href="#chev"/></svg></button><input class="tick" type="checkbox" id="l6"><svg class="ic"><use href="#t-poly"/></svg><label for="l6">ElectricityLine_MultiRingBuffer</label></div>
            <div class="node off"><span class="exp"></span><input class="tick" type="checkbox" id="l7"><svg class="ic"><use href="#t-buf"/></svg><label for="l7">Buffer</label></div>
            <div class="node"><button class="exp" aria-label="Expand"><svg width="11" height="11"><use href="#chev"/></svg></button><input class="tick" type="checkbox" id="l8"><svg class="ic"><use href="#group"/></svg><label for="l8">ROADS</label></div>
            <div class="node"><button class="exp" aria-label="Expand"><svg width="11" height="11"><use href="#chev"/></svg></button><input class="tick" type="checkbox" id="l9"><svg class="ic"><use href="#group"/></svg><label for="l9">BOUNDARIES</label></div>
            <div class="node"><span class="exp"></span><input class="tick" type="checkbox" id="l10"><svg class="ic"><use href="#group"/></svg><label for="l10">OSMM</label></div>
            <div class="node"><button class="exp" aria-label="Expand"><svg width="11" height="11"><use href="#chev"/></svg></button><input class="tick" type="checkbox" id="l11" checked><svg class="ic"><use href="#group"/></svg><label for="l11">ENVIRONMENTAL</label></div>
            <div class="node"><button class="exp" aria-label="Expand"><svg width="11" height="11"><use href="#chev"/></svg></button><input class="tick" type="checkbox" id="l12"><svg class="ic"><use href="#group"/></svg><label for="l12">WOKING</label></div>
            <div class="node"><button class="exp" aria-label="Expand"><svg width="11" height="11"><use href="#chev"/></svg></button><input class="tick" type="checkbox" id="l13"><svg class="ic"><use href="#group"/></svg><label for="l13">RASTER</label></div>
          </div>
        </div>
      </aside>
      <section class="canvas flex-grow-1" aria-label="Map canvas">
        <svg width="100%" height="100%">
          <g transform="translate(-273 -131)" stroke="#111" fill="#e783ad">
            <path d="M260 164L366.500 193.500 335.500 310 260 290z"/>
            <path d="M366.500 193.500L491 227.500 460 344.500 442.500 339.500 419 427.500 349.500 408.500 373 320.500 335.500 310z"/>
            <path d="M491 227.500L577.500 251 521 455.500 419 427.500 442.500 339.500 460 344.500z"/>
            <path d="M677 282L841.500 324 813 434.500 747.500 419 729.500 490 631.500 465.500z"/>
            <path d="M846.500 304L963 333.500 921.500 496.500 805 466z"/>
            <path d="M1073 600L1242 641 1218 740 1038 740z"/>
            <path d="M598 240.500L682 262.500 621.500 508 536 486.500z" fill="#ff0"/>
            <use href="#vmark" x="595" y="237" width="6" height="6"/><use href="#vmark" x="679" y="259" width="6" height="6"/>
            <use href="#vmark" x="674" y="279" width="6" height="6"/><use href="#vmark" x="582" y="287" width="6" height="6"/>
            <use href="#vmark" x="559" y="378" width="6" height="6"/><use href="#vmark" x="645" y="392" width="6" height="6"/>
            <use href="#vmark" x="539" y="458" width="6" height="6"/><use href="#vmark" x="628" y="462" width="6" height="6"/>
            <use href="#vmark" x="532" y="483" width="6" height="6"/><use href="#vmark" x="618" y="505" width="6" height="6"/>
          </g>
        </svg>
      </section>
    </main>

    <footer class="status d-flex align-items-center">
      <div class="field search"><svg class="flex-shrink-0" width="11" height="11"><circle cx="4.500" cy="4.500" r="3.500" fill="none" stroke="#888"/><path d="M7 7l3.500 3.500" stroke="#888" stroke-width="1.300"/></svg><input type="text" value="buffer" aria-label="Locate"><button class="tb w-auto h-auto me-1" aria-label="Clear"><svg width="12" height="9"><path d="M0 4.500L4 0h8v9H4z" fill="#909499"/><path d="M5 2.500l4 4M9 2.500l-4 4" stroke="#fff"/></svg></button></div>
      <span class="ms-2 flex-grow-1">1 feature(s) selected on layer OSMM_TF.</span>
      <label class="me-1" for="coord">Coordinate</label>
      <div class="field w110"><input class="text-center" id="coord" type="text" value="-0.5654,51.3063"></div>
      <button class="tb" aria-label="Toggle extents"><svg class="ic"><use href="#mouse"/></svg></button>
      <label class="mx-1" for="scale">Scale</label>
      <div class="pick light w71"><select id="scale"><option>1:247</option></select><svg width="7" height="5"><path d="M.5.5l3 3 3-3" fill="none" stroke="#555"/></svg></div>
      <button class="tb" aria-label="Lock scale"><svg class="ic"><use href="#lock"/></svg></button>
      <label class="mx-1" for="mag">Magnifier</label>
      <div class="spin w68"><input id="mag" type="text" value="100%"><span class="steps"><button aria-label="Increase"></button><button aria-label="Decrease"></button></span></div>
      <label class="ms-1 me-2" for="rot">Rotation</label>
      <div class="spin w68"><input id="rot" type="text" value="0.0 °"><span class="steps"><button aria-label="Increase"></button><button aria-label="Decrease"></button></span></div>
      <input class="tick ms-1 me-1" type="checkbox" id="render" checked><label for="render">Render</label>
      <button class="tb crs" aria-label="Projection"><svg class="ic"><use href="#globe"/></svg><span>OSGEO:41001</span></button>
      <button class="tb msgs" aria-label="Messages"><svg class="ic"><use href="#bubble"/></svg></button>
    </footer>
  </div>
</div>
<svg class="pointer" viewBox="0 0 13 18" aria-hidden="true"><path d="M2 1v14l3.500-3 2.500 5 2-1-2.300-5H12z" fill="#fff" stroke="#333"/></svg>
</body>
</html>
